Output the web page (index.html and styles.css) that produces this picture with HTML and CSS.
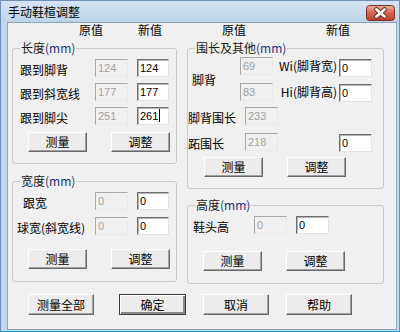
FILE: index.html
```html
<!DOCTYPE html>
<html lang="zh-CN">
<head>
  <meta charset="UTF-8" />
  <meta name="viewport" content="width=device-width, initial-scale=1.0" />
  <title>手动鞋楦调整</title>
  <link rel="stylesheet" href="styles.css">
</head>
<body>
  <div class="window">
    <!-- Title bar -->
    <div class="titlebar">
      <span class="title">手动鞋楦调整</span>
      <span class="close-btn">
        <svg width="29" height="16" viewBox="0 0 29 16">
          <defs>
            <linearGradient id="closeGrad" x1="0" y1="0" x2="0" y2="1">
              <stop offset="0" stop-color="#eab0a4" />
              <stop offset="0.45" stop-color="#d66a56" />
              <stop offset="1" stop-color="#c03a26" />
            </linearGradient>
          </defs>
          <rect x="0.5" y="0.5" width="28" height="15" rx="3" fill="url(#closeGrad)" stroke="#7c3024" />
          <path d="M10.5 4.5 L18.5 11.5 M18.5 4.5 L10.5 11.5" stroke="#6b2419" stroke-width="4.6" stroke-linecap="round" />
          <path d="M10.5 4.5 L18.5 11.5 M18.5 4.5 L10.5 11.5" stroke="#ffffff" stroke-width="2.8" stroke-linecap="round" />
        </svg>
      </span>
    </div>

    <div class="client">
      <!-- Column headers -->
      <div class="heads">
        <span class="head">原值</span>
        <span class="head head-new">新值</span>
        <span class="head head-orig2">原值</span>
        <span class="head head-new2">新值</span>
      </div>

      <div class="columns">
        <!-- Left column -->
        <div class="col">
          <fieldset class="group g-length">
            <legend>长度<span class="unit">(mm)</span></legend>
            <div class="form-grid">
              <span class="lbl">跟到脚背</span>
              <span class="field disabled">124</span>
              <span class="field">124</span>
              <span class="lbl">跟到斜宽线</span>
              <span class="field disabled">177</span>
              <span class="field">177</span>
              <span class="lbl">跟到脚尖</span>
              <span class="field disabled">251</span>
              <span class="field">261<i class="caret"></i></span>
            </div>
            <div class="btn-row">
              <button class="btn">测量</button>
              <button class="btn">调整</button>
            </div>
          </fieldset>

          <fieldset class="group g-width">
            <legend>宽度<span class="unit">(mm)</span></legend>
            <div class="form-grid wide-gap">
              <span class="lbl lbl-heel">跟宽</span>
              <span class="field disabled">0</span>
              <span class="field">0</span>
              <span class="lbl lbl-ball">球宽(斜宽线)</span>
              <span class="field disabled">0</span>
              <span class="field">0</span>
            </div>
            <div class="btn-row btn-row-low">
              <button class="btn">测量</button>
              <button class="btn">调整</button>
            </div>
          </fieldset>
        </div>

        <!-- Right column -->
        <div class="col">
          <fieldset class="group g-girth">
            <legend>围长及其他<span class="unit">(mm)</span></legend>
            <div class="girth-grid">
              <span class="lbl lbl-instep">脚背</span>
              <span class="field disabled">69</span>
              <span class="note">Wi(脚背宽)</span>
              <span class="field field-r1">0</span>
              <span class="field disabled">83</span>
              <span class="note">Hi(脚背高)</span>
              <span class="field field-r">0</span>
              <span class="lbl lbl-low">脚背围长</span>
              <span class="field disabled field-in">233</span>
              <span class="lbl lbl-low">跖围长</span>
              <span class="field disabled field-in">218</span>
              <span class="field field-r field-last">0</span>
            </div>
            <div class="btn-row btn-row-right">
              <button class="btn">测量</button>
              <button class="btn">调整</button>
            </div>
          </fieldset>

          <fieldset class="group g-height">
            <legend>高度<span class="unit">(mm)</span></legend>
            <div class="height-row">
              <span class="lbl lbl-toe">鞋头高</span>
              <span class="field disabled">0</span>
              <span class="field">0</span>
            </div>
            <div class="btn-row btn-row-height">
              <button class="btn">测量</button>
              <button class="btn">调整</button>
            </div>
          </fieldset>
        </div>
      </div>

      <!-- Dialog buttons -->
      <div class="footer">
        <button class="btn btn-wide btn-all">测量全部</button>
        <button class="btn btn-wide btn-default">确定</button>
        <button class="btn btn-wide">取消</button>
        <button class="btn btn-wide">帮助</button>
      </div>
    </div>
  </div>
</body>
</html>
```

FILE: styles.css
```css
/* Global Styles */
body {
  margin: 0;
  font-family: "Noto Sans CJK SC", "Noto Sans", sans-serif;
  font-size: 12px;
  line-height: 14px;
  color: #000;
  background-color: #fff;
}
/* Window frame */
.window {
  width: 400px;
  height: 332px;
  box-sizing: border-box;
  display: flex;
  flex-direction: column;
  padding: 0 2px 1px 6px;
  background-color: #c4d8ed;
  border: 1px solid #6f8fb4;
  border-bottom-color: #1f9bd7;
}
.titlebar {
  height: 21px;
  flex: none;
  display: flex;
  align-items: center;
  justify-content: space-between;
  margin: 0 -2px 0 -6px;
  padding: 0 4px 0 7px;
  background: linear-gradient(#d4e4f5, #bed4eb);
}
.title {
  font-size: 12px;
  color: #000;
}
.close-btn {
  display: flex;
  margin-top: 2px;
}
.client {
  flex: 1;
  background-color: #f0f0f0;
  border: 1px solid #8ba3bf;
}
/* Column headers */
.heads {
  display: flex;
  height: 14px;
  padding-left: 71px;
}
.head-new {
  margin-left: 35px;
}
.head-orig2 {
  margin-left: 60px;
}
.head-new2 {
  margin-left: 80px;
}
/* Two columns of group boxes */
.columns {
  display: grid;
  grid-template-columns: 165px 197px;
  column-gap: 10px;
  align-items: start;
  margin-top: 4px;
  padding: 0 12px 0 4px;
}
.col {
  display: flex;
  flex-direction: column;
}
.group {
  margin: 0;
  padding: 0;
  min-width: 0;
  border: 1px solid #cbcbcb;
  border-radius: 3px;
}
.group legend {
  margin-left: 7px;
  padding: 0 1px;
  line-height: 14px;
  color: #1a1a1a;
}
.unit {
  color: #1c2f78;
}
.g-length,
.g-width {
  padding: 4px 0 11px 7px;
}
.g-length legend,
.g-width legend {
  margin-left: 0;
}
.g-width {
  margin-top: 10px;
  padding-bottom: 12px;
}
.g-girth {
  padding: 2px 0 11px 0;
}
.g-height {
  margin-top: 9px;
  padding: 4px 0 12px 0;
}
/* Label + two fields rows */
.form-grid {
  display: grid;
  grid-template-columns: 75px 42px 32px;
  grid-auto-rows: 18px;
  row-gap: 6px;
}
.form-grid.wide-gap {
  row-gap: 7px;
}
.lbl {
  line-height: 18px;
  padding-top: 2px;
  white-space: nowrap;
}
.lbl-heel {
  margin-left: 3px;
}
.lbl-ball {
  margin-left: -3px;
}
/* Girth group */
.girth-grid {
  display: grid;
  grid-template-columns: 52px 38px 61px 32px;
  grid-template-rows: 26px 24px 26px 18px;
  align-items: start;
}
.lbl-instep {
  grid-row: 1 / 3;
  align-self: center;
  padding: 0 0 4px 4px;
}
.lbl-low {
  grid-column: 1;
}
.note {
  justify-self: end;
  padding-right: 2px;
  line-height: 18px;
  white-space: nowrap;
}
.field-r1 {
  margin-top: 2px;
}
.field-r {
  margin-top: 1px;
}
.field-in {
  grid-column: 2;
  justify-self: end;
}
.field-last {
  grid-column: 4;
}
/* Height group */
.height-row {
  display: flex;
  gap: 9px;
}
.lbl-toe {
  width: 61px;
  padding-left: 5px;
  margin-right: -9px;
  padding-top: 2px;
}
.height-row .field:last-child {
  width: 33px;
}
/* Edit fields */
.field {
  box-sizing: border-box;
  width: 33px;
  height: 18px;
  padding: 0 2px;
  font-family: "Liberation Sans", Arial, sans-serif;
  font-size: 11px;
  line-height: 16px;
  color: #000;
  background-color: #fff;
  border: 1px solid;
  border-color: #6e6e6e #e3e3e3 #e3e3e3 #6e6e6e;
  box-shadow: inset 1px 1px 0 #b4b4b4;
}
.form-grid .field:nth-child(3n) {
  width: 32px;
}
.field.disabled {
  color: #a0a0a0;
  background-color: #f0f0f0;
  border-color: #a8a8a8 #e8e8e8 #e8e8e8 #a8a8a8;
  box-shadow: none;
}
.caret {
  display: inline-block;
  width: 1px;
  height: 13px;
  margin-left: 1px;
  vertical-align: -2px;
  background-color: #000;
}
/* Buttons */
.btn-row {
  display: flex;
  gap: 24px;
  margin: 7px 0 0 8px;
}
.btn-row-low {
  margin-top: 14px;
}
.btn-row-right {
  margin: 6px 0 0 16px;
}
.btn-row-height {
  margin: 15px 0 0 15px;
}
.btn {
  box-sizing: border-box;
  width: 59px;
  height: 20px;
  padding: 0;
  font-family: inherit;
  font-size: 12px;
  line-height: 16px;
  color: #000;
  background-color: #ececec;
  border: 1px solid;
  border-color: #ffffff #696969 #696969 #ffffff;
  box-shadow: inset -1px -1px 0 #a0a0a0;
}
/* Dialog footer */
.footer {
  display: flex;
  gap: 17px;
  margin-top: 10px;
  padding-left: 20px;
}
.btn-wide {
  width: 66px;
  height: 21px;
}
.btn-all {
  margin-right: 8px;
}
.btn-default {
  width: 67px;
  border-color: #3c3c3c;
  box-shadow: inset 1px 1px 0 #fff, inset -2px -2px 0 #8a8a8a;
}
```
